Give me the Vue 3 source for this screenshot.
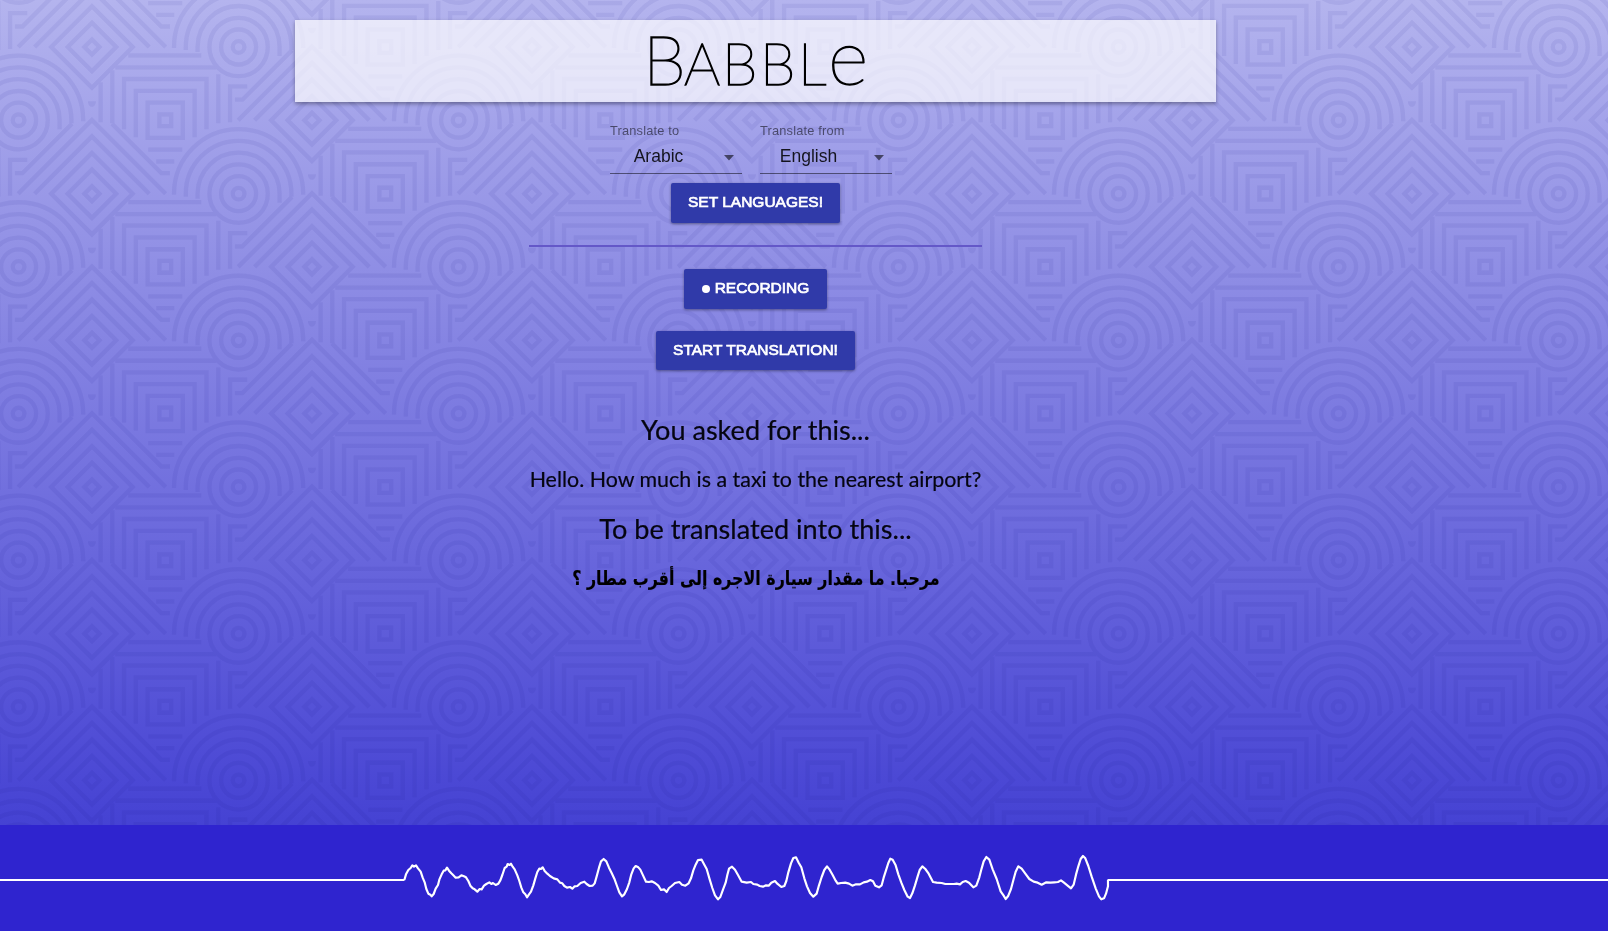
<script setup>
const kinds = ['circle', 'diamond', 'square']
const motifs = []
for (let k = -1; k <= 22; k++) {
  for (let row = -1; row <= 6; row++) {
    motifs.push({
      id: `${k}:${row}`,
      kind: kinds[(k + 3) % 3],
      x: 18.6 + k * 73.333,
      y: (k % 2 === 0 ? 120.2 : 47) + row * 146.667,
    })
  }
}

const fields = [
  { label: 'Translate to', value: 'Arabic' },
  { label: 'Translate from', value: 'English' },
]

const wave =
  '43,195 48,178 55,165 62,159 67,151 72,155 78,151 84,160 92,170 98,188 104,202 109,222 115,236 121,239 125,244 131,237 137,221 144,210 148,194 155,178 161,167 166,166 171,158 177,167 184,175 190,181 197,188 206,187 214,181 222,184 228,187 235,198 241,212 248,220 254,223 262,230 269,222 275,223 282,212 289,207 298,202 304,207 309,204 317,210 325,206 331,196 337,180 344,159 350,155 353,147 359,150 363,146 368,155 374,163 382,181 388,198 394,218 400,232 406,238 411,247 417,238 423,230 430,211 436,190 442,171 448,161 453,162 458,157 464,168 472,176 480,183 491,190 502,193 510,203 517,205 523,213 531,218 540,216 547,221 554,214 562,213 572,204 583,200 590,207 599,213 608,212 614,205 620,184 627,158 633,139 641,132 649,139 657,158 665,174 673,191 681,213 688,232 696,244 703,238 711,222 718,202 724,178 731,160 737,153 745,157 751,164 758,179 768,200 777,201 785,199 795,204 805,212 813,225 822,223 830,231 837,219 845,213 855,204 868,201 876,209 886,212 896,205 903,190 910,166 917,149 924,135 935,134 943,149 950,162 959,193 967,219 975,241 984,253 991,246 999,224 1007,203 1012,180 1017,161 1026,155 1035,164 1044,180 1055,200 1070,203 1083,201 1090,207 1102,209 1109,213 1119,215 1128,211 1136,212 1144,203 1155,198 1162,206 1174,216 1183,213 1189,198 1195,172 1203,145 1210,129 1218,127 1226,143 1234,157 1243,190 1251,214 1260,234 1270,245 1280,236 1287,211 1295,186 1303,165 1311,154 1319,164 1328,180 1337,197 1343,206 1353,204 1366,203 1377,206 1387,212 1398,208 1410,208 1421,202 1431,200 1441,195 1449,199 1456,212 1467,217 1475,211 1481,188 1488,166 1495,144 1501,131 1508,134 1517,151 1525,178 1534,203 1543,225 1553,245 1560,249 1567,235 1575,211 1583,184 1589,165 1597,154 1606,162 1616,176 1629,201 1640,203 1655,204 1666,207 1680,207 1692,207 1700,206 1710,208 1718,201 1727,198 1737,203 1750,217 1759,212 1768,187 1775,160 1781,139 1789,126 1798,134 1808,163 1820,192 1832,229 1841,242 1847,252 1854,244 1863,222 1870,196 1877,170 1885,154 1895,161 1906,176 1918,192 1931,200 1943,203 1955,209 1969,202 1982,203 1993,202 2004,201 2013,196 2022,203 2032,211 2043,220 2051,209 2058,179 2065,154 2072,132 2079,123 2086,130 2095,153 2105,185 2117,220 2127,244 2134,253 2142,250 2148,236 2154,214 2154,195'
</script>

<template>
  <main class="page">
    <svg class="backdrop" width="1608" height="825" viewBox="0 0 1608 825" aria-hidden="true">
      <defs>
        <g id="circle">
          <circle r="5.8" />
          <circle r="17.5" />
          <circle r="29.2" />
          <path d="M-41,5V0A41,41 0 0 1 41,0V9" />
          <path d="M-52.8,3V0A52.8,52.8 0 0 1 52.8,0V3" />
          <path d="M-64.6,1V0A64.6,64.6 0 0 1 64.6,0V1" />
        </g>
        <g id="diamond">
          <path d="M0,-7.5L7.5,0L0,7.5L-7.5,0Z" />
          <path d="M0,-24.2L24.2,0L0,24.2L-24.2,0Z" />
          <path d="M0,-40.7L40.7,0L0,40.7L-40.7,0Z" />
          <path d="M-57.3,0L0,-57.3L57.3,0" />
          <path d="M-73.7,0L0,-73.7L73.7,0" />
          <path d="M-77,-20.5H-69.5L-20,-70" />
          <path d="M78,-20.5H69.5L20,-70" />
          <path class="solid" d="M-4,-92.500H4C4,-89 2,-87 0,-87C-2,-87 -4,-89 -4,-92.500Z" />
        </g>
        <g id="square">
          <path d="M-5.900,-5.900H5.900V5.900H-5.900Z" />
          <path d="M-17.600,-17.600H17.600V17.600H-17.600Z" />
          <path d="M-29.400,17V-29.400H29.400V17" />
          <path d="M-41.200,9V-41.200H41.200V9" />
          <path d="M-50,-52.800H51M-53,-50V3M53,-46V3" />
          <path d="M-37,-64.800H36M-64.600,-38V2M82,-33.800H64.800V2" />
          <path d="M-17,29.500H17M-9,41.300H9" />
        </g>
      </defs>
      <g class="lines">
        <use v-for="m in motifs" :key="m.id" :href="`#${m.kind}`" :x="m.x" :y="m.y" />
      </g>
    </svg>

    <section class="content">
      <header class="banner">
        <h1 class="brand"><span class="big">B</span><span class="small a">a</span><span class="small">b</span><span class="small">b</span><span class="small l">l</span><span class="end">e</span></h1>
      </header>

      <div class="fields">
        <div v-for="f in fields" :key="f.label" class="field">
          <label>{{ f.label }}</label>
          <div class="value">
            <span>{{ f.value }}</span>
            <svg width="10" height="6" viewBox="0 0 10 6"><path d="M0 0H10L5 5.500Z" /></svg>
          </div>
        </div>
      </div>

      <button class="btn set">SET LANGUAGES!</button>
      <hr />
      <button class="btn rec"><i class="dot"></i>RECORDING</button>
      <button class="btn start">START TRANSLATION!</button>

      <h2 class="asked">You asked for this...</h2>
      <p class="source">Hello. How much is a taxi to the nearest airport?</p>
      <h2 class="into">To be translated into this...</h2>
      <p class="arabic" dir="rtl">مرحبا. ما مقدار سيارة الاجره إلى أقرب مطار ؟</p>
    </section>

    <footer class="wavebar">
      <svg width="1608" height="106" viewBox="0 0 1608 106">
        <path class="flat" d="M0,55H404.500M1107.500,55H1608" />
        <polyline transform="translate(390 -10) scale(.33333)" :points="wave" />
      </svg>
    </footer>
  </main>
</template>

<style>
body {
  overflow: hidden;
}
</style>

<style scoped>
.page {
  position: relative;
  display: flex;
  flex-direction: column;
  width: 1608px;
  height: 931px;
  overflow: hidden;
  background: linear-gradient(#b4b4ee 0, #8c8be4 290px, #6866dc 560px, #4542d3 825px);
  font-family: "Liberation Sans", Arial, sans-serif;
}
.backdrop {
  position: absolute;
  top: 0;
  left: 0;
}
.lines {
  fill: none;
  stroke: #19148c;
  stroke-width: 4.3;
  stroke-linejoin: miter;
  opacity: .068;
}
.solid {
  fill: #19148c;
  stroke: none;
}
.content {
  position: relative;
  display: flex;
  flex-direction: column;
  align-items: center;
  width: 921px;
  height: 805px;
  margin: 20px 0 0 295px;
  flex: none;
}
.banner {
  display: flex;
  justify-content: center;
  width: 921px;
  height: 82px;
  flex: none;
  background: rgba(255, 255, 255, .7);
  box-shadow: 0 2px 4px rgba(0, 0, 0, .35);
}
.brand {
  display: flex;
  align-items: baseline;
  height: 82px;
  margin: 0 5px 0 0;
  color: #000;
  font-family: Lato, sans-serif;
  font-weight: 100;
  line-height: 70px;
}
.brand span {
  display: block;
  -webkit-text-stroke: 1.4px #000;
}
.big {
  width: 41px;
  font-size: 69px;
}
.small {
  width: 38px;
  font-size: 57px;
  text-transform: uppercase;
}
.small.a {
  width: 38px;
}
.small.l {
  width: 30px;
}
.end {
  width: 35px;
  font-size: 78px;
}
.fields {
  display: flex;
  gap: 18px;
  width: 282px;
  margin: 21px 9px 0 0;
}
.field {
  width: 132px;
  height: 50px;
  border-bottom: 1px solid rgba(0, 0, 0, .5);
}
.field label {
  display: block;
  height: 15px;
  color: rgba(0, 0, 0, .54);
  font-size: 12.800px;
  letter-spacing: .18px;
  line-height: 16px;
}
.value {
  display: flex;
  align-items: center;
  height: 35px;
  padding-right: 8px;
  color: rgba(0, 0, 0, .87);
  font-size: 17.500px;
  line-height: 35px;
}
.value span {
  flex: 1;
  padding: 1px 17px 0 0;
  text-align: center;
}
.value svg {
  margin-top: 4px;
  fill: rgba(0, 0, 0, .56);
}
.btn {
  display: flex;
  align-items: center;
  justify-content: center;
  flex: none;
  height: 40px;
  padding: 0 0 3px;
  border: 0;
  border-radius: 2px;
  background: #303aa9;
  box-shadow: 0 1px 3px rgba(0, 0, 0, .4);
  color: #fff;
  font-family: inherit;
  font-size: 15.500px;
  -webkit-text-stroke: .7px #fff;
}
.set {
  width: 169px;
  margin-top: 9px;
}
hr {
  flex: none;
  width: 453px;
  height: 2px;
  margin: 22px 0;
  border: 0;
  background: #6458c8;
}
.rec {
  width: 143px;
}
.dot {
  width: 8px;
  height: 8px;
  margin: 2px 5px 0 0;
  border-radius: 50%;
  background: #fff;
}
.start {
  width: 199px;
  height: 39px;
  margin-top: 22px;
  padding-bottom: 2px;
}
h2,
p {
  margin: 0;
  color: #050510;
  font-family: Lato, "Open Sans", sans-serif;
  font-weight: 400;
  white-space: nowrap;
  -webkit-text-stroke: .2px #050510;
}
h2 {
  height: 40px;
  font-size: 27.100px;
  line-height: 40px;
}
p {
  height: 30px;
  font-size: 21.400px;
  line-height: 30px;
}
.asked {
  margin-top: 40px;
}
.source {
  margin-top: 14px;
}
.into {
  margin-top: 15px;
}
.arabic {
  margin-top: 15px;
  color: #000;
  font-family: "DejaVu Sans", sans-serif;
  font-weight: 700;
  font-size: 19.500px;
  transform: scaleX(.813);
}
.wavebar {
  position: relative;
  width: 1608px;
  height: 106px;
  flex: none;
  background: #2f24cf;
}
.wavebar svg {
  display: block;
  fill: none;
  stroke: #fff;
}
.flat {
  stroke-width: 2;
}
.wavebar polyline {
  stroke-width: 6.500;
  stroke-linejoin: round;
}
</style>
